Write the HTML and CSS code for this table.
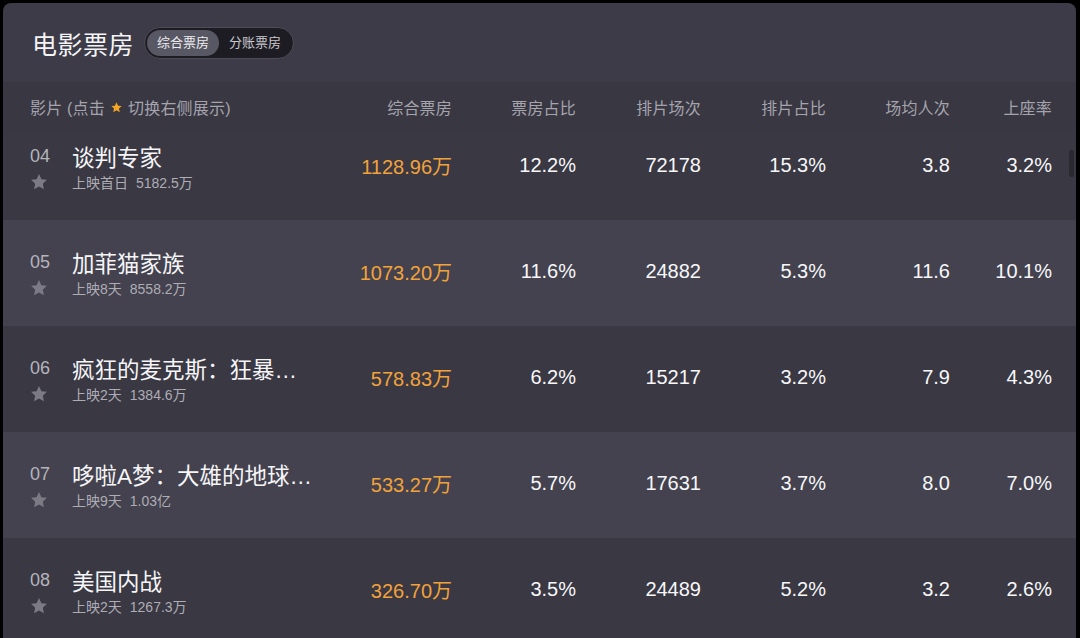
FILE: index.html
```
<!DOCTYPE html>
<html lang="zh">
<head>
<meta charset="utf-8">
<title>电影票房</title>
<link rel="stylesheet" href="styles.css">
</head>
<body>
<div class="panel">
  <div class="titlebar">
    <h1 class="title">电影票房</h1>
    <div class="toggle">
      <span class="seg active">综合票房</span>
      <span class="seg">分账票房</span>
    </div>
  </div>
  <div class="thead grid">
    <div class="th first">影片 (点击 <svg class="hstar" viewBox="0 0 24 24"><path d="M12 2.5l2.9 6.1 6.6.8-4.9 4.6 1.3 6.6L12 17.3l-5.9 3.3 1.3-6.6-4.9-4.6 6.6-.8z"/></svg> 切换右侧展示)</div>
    <div class="th">综合票房</div>
    <div class="th">票房占比</div>
    <div class="th">排片场次</div>
    <div class="th">排片占比</div>
    <div class="th">场均人次</div>
    <div class="th">上座率</div>
  </div>
  <div class="body">
    <div class="scrollbar"></div>
    <div class="rows">
      <div class="row grid dark">
        <div class="film">
          <span class="rank">04</span><span class="name">谈判专家</span>
          <svg class="star" viewBox="0 0 24 24"><path d="M12 2.5l2.9 6.1 6.6.8-4.9 4.6 1.3 6.6L12 17.3l-5.9 3.3 1.3-6.6-4.9-4.6 6.6-.8z"/></svg><span class="sub"><span>上映首日</span><span class="total">5182.5万</span></span>
        </div>
        <div class="td money">1128.96万</div>
        <div class="td">12.2%</div>
        <div class="td">72178</div>
        <div class="td">15.3%</div>
        <div class="td">3.8</div>
        <div class="td">3.2%</div>
      </div>
      <div class="row grid light">
        <div class="film">
          <span class="rank">05</span><span class="name">加菲猫家族</span>
          <svg class="star" viewBox="0 0 24 24"><path d="M12 2.5l2.9 6.1 6.6.8-4.9 4.6 1.3 6.6L12 17.3l-5.9 3.3 1.3-6.6-4.9-4.6 6.6-.8z"/></svg><span class="sub"><span>上映8天</span><span class="total">8558.2万</span></span>
        </div>
        <div class="td money">1073.20万</div>
        <div class="td">11.6%</div>
        <div class="td">24882</div>
        <div class="td">5.3%</div>
        <div class="td">11.6</div>
        <div class="td">10.1%</div>
      </div>
      <div class="row grid dark">
        <div class="film">
          <span class="rank">06</span><span class="name">疯狂的麦克斯：狂暴女神</span>
          <svg class="star" viewBox="0 0 24 24"><path d="M12 2.5l2.9 6.1 6.6.8-4.9 4.6 1.3 6.6L12 17.3l-5.9 3.3 1.3-6.6-4.9-4.6 6.6-.8z"/></svg><span class="sub"><span>上映2天</span><span class="total">1384.6万</span></span>
        </div>
        <div class="td money">578.83万</div>
        <div class="td">6.2%</div>
        <div class="td">15217</div>
        <div class="td">3.2%</div>
        <div class="td">7.9</div>
        <div class="td">4.3%</div>
      </div>
      <div class="row grid light">
        <div class="film">
          <span class="rank">07</span><span class="name">哆啦A梦：大雄的地球交响乐</span>
          <svg class="star" viewBox="0 0 24 24"><path d="M12 2.5l2.9 6.1 6.6.8-4.9 4.6 1.3 6.6L12 17.3l-5.9 3.3 1.3-6.6-4.9-4.6 6.6-.8z"/></svg><span class="sub"><span>上映9天</span><span class="total">1.03亿</span></span>
        </div>
        <div class="td money">533.27万</div>
        <div class="td">5.7%</div>
        <div class="td">17631</div>
        <div class="td">3.7%</div>
        <div class="td">8.0</div>
        <div class="td">7.0%</div>
      </div>
      <div class="row grid dark">
        <div class="film">
          <span class="rank">08</span><span class="name">美国内战</span>
          <svg class="star" viewBox="0 0 24 24"><path d="M12 2.5l2.9 6.1 6.6.8-4.9 4.6 1.3 6.6L12 17.3l-5.9 3.3 1.3-6.6-4.9-4.6 6.6-.8z"/></svg><span class="sub"><span>上映2天</span><span class="total">1267.3万</span></span>
        </div>
        <div class="td money">326.70万</div>
        <div class="td">3.5%</div>
        <div class="td">24489</div>
        <div class="td">5.2%</div>
        <div class="td">3.2</div>
        <div class="td">2.6%</div>
      </div>
    </div>
  </div>
</div>
</body>
</html>
```
FILE: styles.css
```
* { box-sizing: border-box; }
html, body { margin: 0; padding: 0; }
body {
  background: #000;
  width: 1080px;
  height: 638px;
  overflow: hidden;
  font-family: "Liberation Sans", "Noto Sans CJK SC", sans-serif;
  padding: 3px 4px 0 3px;
}
.panel {
  background: #3c3b47;
  border-radius: 8px 8px 0 0;
  height: 700px;
  overflow: hidden;
}
.titlebar {
  height: 79px;
  display: flex;
  align-items: center;
  padding: 1px 0 0 29px;
  gap: 10px;
}
.title {
  margin: 0;
  font-size: 25px;
  font-weight: normal;
  color: #f4f4f6;
  letter-spacing: 0.5px;
}
.toggle {
  display: flex;
  align-items: center;
  height: 32px;
  padding: 2px;
  border-radius: 16px;
  background: #1d1c23;
  border: 1px solid #4d4c57;
}
.seg {
  font-size: 13px;
  color: #c9c8ce;
  padding: 0 10px;
  height: 26px;
  line-height: 26px;
  border-radius: 13px;
}
.seg.active {
  background: #585764;
  color: #eeeef0;
}
.grid {
  display: grid;
  grid-template-columns: 310px 112px 124px 125px 125px 124px 102px;
  padding: 0 24px 0 27px;
  align-items: center;
}
.thead {
  height: 50px;
  background: #383742;
  position: relative;
  z-index: 2;
}
.th {
  font-size: 16px;
  color: #a5a4ad;
  text-align: right;
  letter-spacing: 0.2px;
}
.th.first {
  text-align: left;
  display: flex;
  align-items: center;
}
.hstar {
  width: 13px;
  height: 13px;
  fill: #f5a623;
  margin: 0 5px 0 5px;
}
.body {
  position: relative;
  height: 560px;
  overflow: hidden;
}
.scrollbar {
  position: absolute;
  right: 2px;
  top: 18px;
  width: 5px;
  height: 27px;
  border-radius: 3px;
  background: #2a2931;
  z-index: 3;
}
.rows {
  margin-top: -18px;
}
.row {
  height: 106px;
}
.row.dark { background: #393843; }
.row.light { background: #43424e; }
.film {
  display: grid;
  grid-template-columns: 42px 1fr;
  grid-template-rows: 28px 24px;
  align-items: center;
  margin-top: 1px;
}
.rank {
  font-size: 18px;
  color: #b5b4bc;
  margin-top: 2px;
}
.name {
  font-size: 22.5px;
  color: #f5f5f7;
  max-width: 246px;
  white-space: nowrap;
  overflow: hidden;
  text-overflow: ellipsis;
}
.star {
  width: 20px;
  height: 20px;
  fill: #7b7a85;
  margin-left: -1px;
}
.sub {
  font-size: 14px;
  color: #aeadb5;
  display: flex;
  gap: 8px;
}
.td {
  font-size: 20px;
  color: #f7f7f9;
  text-align: right;
  padding-bottom: 4px;
}
.td.money {
  color: #f2a23a;
}
```
